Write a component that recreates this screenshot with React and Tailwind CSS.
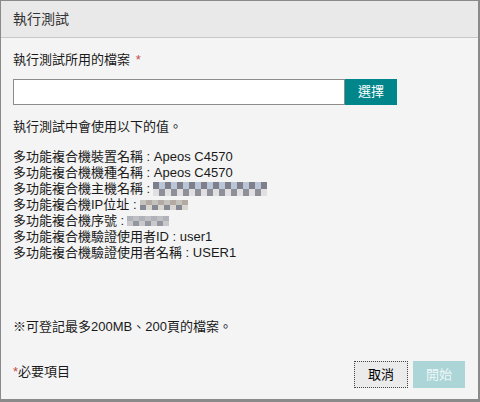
import React from "react";

const font = { fontFamily: '"Liberation Sans", Arial, "Noto Sans CJK TC", sans-serif' };

const palette = ["#c9c9cb", "#8f8f98", "#bfbfc4", "#7e7f8a", "#d9d6d0", "#a9b3c4", "#c4c2bd", "#9497a0", "#e0e0e2", "#b0b3bb", "#b8c6d8", "#868993", "#cdd3db", "#b3aba3"];

function Mosaic({ cols, seed, cell = 6 }) {
  const rows = [0, 1];
  return (
    <span className="inline-flex flex-col align-middle">
      {rows.map((r) => (
        <span key={r} className="flex">
          {Array.from({ length: cols }).map((_, i) => (
            <span
              key={i}
              className="block"
              style={{ width: 6, height: cell, backgroundColor: palette[(i * 7 + r * 5 + seed * 3) % palette.length] }}
            />
          ))}
        </span>
      ))}
    </span>
  );
}

export default function App() {
  return (
    <div className="w-[480px] h-[402px] bg-[#8a8a8a] pt-px pl-px pr-[2px] pb-[3px]" style={font}>
      <div className="w-full h-full bg-[#f4f4f4] flex flex-col text-[13px] text-[#1a1a1a]">
        <div className="h-[37px] bg-[#e9e9e9] border-b border-[#c8c8c8] flex items-center pl-[12px] text-[14px] text-[#333]">
          執行測試
        </div>
        <div className="pl-[12px] pr-[12px] pt-[14px] flex-1 flex flex-col">
          <div className="leading-[16px]">
            執行測試所用的檔案 <span className="text-[#c84a4a] ml-[2px]">*</span>
          </div>
          <div className="flex mt-[11px]">
            <div className="w-[332px] h-[26px] bg-white border border-[#8c8c8c]"></div>
            <button className="w-[52px] h-[26px] bg-[#00868a] text-white text-[13px] flex items-center justify-center">
              選擇
            </button>
          </div>
          <div className="leading-[16px] mt-[14px]">執行測試中會使用以下的值。</div>
          <div className="mt-[14px] leading-[16px]">
            <div>多功能複合機裝置名稱 : Apeos C4570</div>
            <div>多功能複合機機種名稱 : Apeos C4570</div>
            <div className="flex items-center">
              <span>多功能複合機主機名稱 :</span>
              <span className="ml-[3px] flex"><Mosaic cols={19} seed={1} cell={7} /></span>
            </div>
            <div className="flex items-center">
              <span>多功能複合機IP位址 :</span>
              <span className="ml-[3px] flex"><Mosaic cols={8} seed={2} cell={5} /></span>
            </div>
            <div className="flex items-center">
              <span>多功能複合機序號 :</span>
              <span className="ml-[3px] flex"><Mosaic cols={7} seed={3} cell={5} /></span>
            </div>
            <div>多功能複合機驗證使用者ID : user1</div>
            <div>多功能複合機驗證使用者名稱 : USER1</div>
          </div>
          <div className="leading-[16px] mt-[58px]">※可登記最多200MB、200頁的檔案。</div>
          <div className="flex items-center justify-between mt-[26px]">
            <div className="leading-[16px] mb-[6px]">
              <span className="text-[#c84a4a]">*</span>必要項目
            </div>
            <div className="flex gap-[5px] mr-[1px]">
              <button className="w-[54px] h-[27px] bg-[#ebebeb] border border-dotted border-[#444] text-[13px] text-black flex items-center justify-center">
                取消
              </button>
              <button className="w-[52px] h-[27px] bg-[#acd5d7] text-[#eef7f7] text-[13px] flex items-center justify-center">
                開始
              </button>
            </div>
          </div>
        </div>
      </div>
    </div>
  );
}
